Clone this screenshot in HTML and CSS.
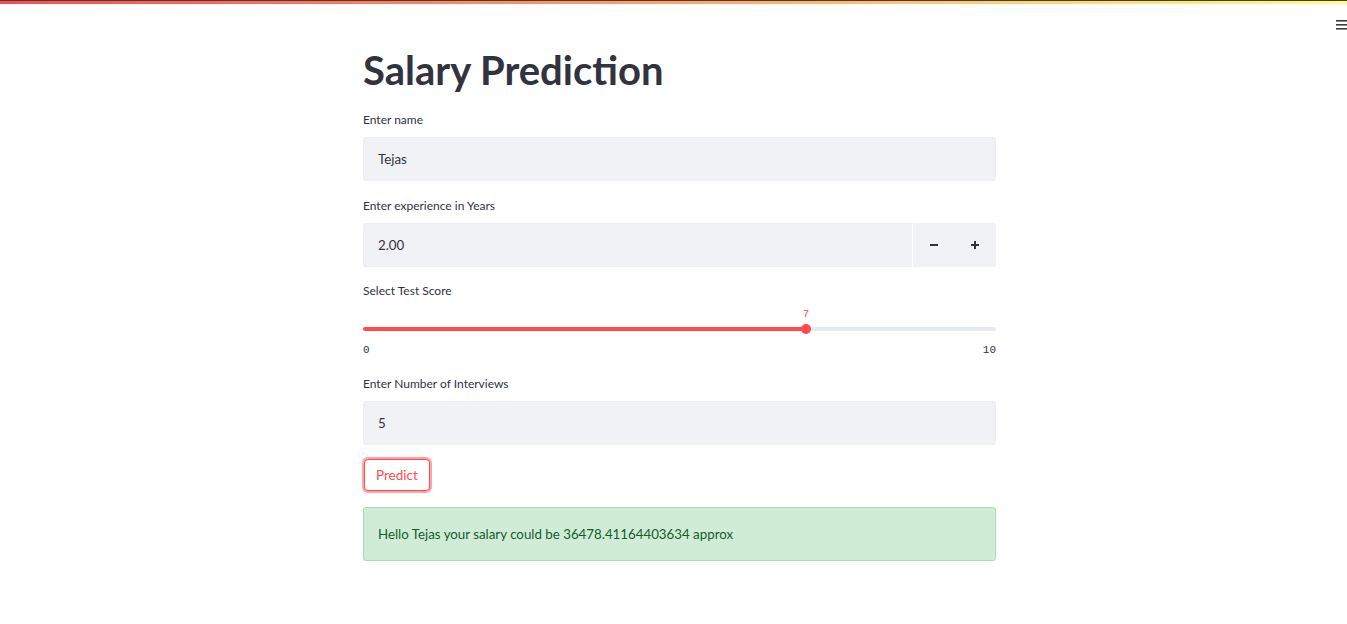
FILE: index.html
```html
<!DOCTYPE html>
<html>
<head>
<meta charset="utf-8">
<link rel="stylesheet" href="styles.css">
</head>
<body>
<div class="topline"></div>
<div class="decoration"></div>
<button class="menu" aria-label="menu">
  <svg width="11" height="10" viewBox="0 0 11 10"><rect x="0" y="0" width="11" height="1.6" fill="#3b3d45"/><rect x="0" y="4" width="11" height="1.6" fill="#3b3d45"/><rect x="0" y="8" width="11" height="1.6" fill="#3b3d45"/></svg>
</button>
<main class="main">
  <h1 class="title">Salary Prediction</h1>

  <div class="field field-name">
    <label class="label">Enter name</label>
    <div class="input"><span>Tejas</span></div>
  </div>

  <div class="field field-exp">
    <label class="label">Enter experience in Years</label>
    <div class="number">
      <div class="input grow"><span>2.00</span></div>
      <div class="steps">
        <span class="step">
          <svg width="8" height="8" viewBox="0 0 8 8"><rect x="0" y="3" width="8" height="2" fill="#31333f"/></svg>
        </span>
        <span class="step">
          <svg width="8" height="8" viewBox="0 0 8 8"><rect x="0" y="3" width="8" height="2" fill="#31333f"/><rect x="3" y="0" width="2" height="8" fill="#31333f"/></svg>
        </span>
      </div>
    </div>
  </div>

  <div class="field field-slider">
    <label class="label">Select Test Score</label>
    <div class="slider">
      <div class="track">
        <div class="fill" style="width:70%"></div>
        <div class="thumb" style="left:70%"><span class="thumbval">7</span></div>
      </div>
      <div class="ticks"><span>0</span><span>10</span></div>
    </div>
  </div>

  <div class="field field-interviews">
    <label class="label">Enter Number of Interviews</label>
    <div class="input"><span>5</span></div>
  </div>

  <button class="btn">Predict</button>

  <div class="success">Hello Tejas your salary could be 36478.41164403634 approx</div>
</main>
</body>
</html>
```

FILE: styles.css
```css
* { box-sizing: border-box; }
html, body { margin: 0; padding: 0; background: #fff; }
body {
  font-family: "Lato", "Noto Sans", sans-serif;
  color: #31333f;
  width: 1347px;
  height: 624px;
  overflow: hidden;
  position: relative;
}
.topline { height: 1px; background: #3f4046; }
.decoration {
  height: 3px;
  background: linear-gradient(90deg, #ff4b4b, #fffd80);
}
.menu {
  position: absolute;
  top: 18px;
  right: 0;
  width: 12px;
  height: 12px;
  padding: 0;
  border: 0;
  background: transparent;
}
.main {
  width: 633px;
  margin-left: 363px;
  padding-top: 40px;
}
.title {
  margin: 0;
  font-size: 40px;
  font-weight: 700;
  line-height: 52px;
  color: #31333f;
}
.field-name { margin-top: 17px; }
.field-exp { margin-top: 18px; }
.field-slider { margin-top: 17px; }
.field-interviews { margin-top: 20px; }
.label {
  display: block;
  font-size: 12px;
  line-height: 13px;
  height: 13px;
  margin-bottom: 11px;
  color: #31333f;
}
.input {
  height: 44px;
  background: #f0f2f6;
  border: 1px solid #eceef2;
  border-radius: 3px;
  display: flex;
  align-items: center;
  padding-left: 14px;
  font-size: 13.3px;
  color: #31333f;
}
.number { display: flex; }
.grow { flex: 1; border-radius: 3px 0 0 3px; border-right: 1px solid #fff; }
.steps {
  width: 83px;
  height: 44px;
  background: #f0f2f6;
  border-radius: 0 3px 3px 0;
  display: flex;
}
.step {
  flex: 1;
  display: flex;
  align-items: center;
  justify-content: center;
}
.slider { padding-top: 19px; }
.track {
  position: relative;
  height: 4px;
  background: #e6eaf1;
  border-radius: 2px;
}
.fill {
  height: 4px;
  background: #ff4b4b;
  border-radius: 2px;
}
.thumb {
  position: absolute;
  top: -3px;
  width: 10px;
  height: 10px;
  margin-left: -5px;
  border-radius: 50%;
  background: #ff4b4b;
}
.thumbval {
  position: absolute;
  top: -16px;
  left: 50%;
  transform: translateX(-50%);
  font-family: "Liberation Mono", "DejaVu Sans Mono", monospace;
  font-size: 11px;
  line-height: 13px;
  color: #ff4b4b;
}
.ticks {
  display: flex;
  justify-content: space-between;
  margin-top: 13px;
  margin-bottom: 1px;
  font-family: "Liberation Mono", "DejaVu Sans Mono", monospace;
  font-size: 11px;
  line-height: 13px;
  color: #31333f;
}
.btn {
  display: block;
  margin-top: 14px;
  margin-left: 1px;
  height: 32px;
  padding: 0 11px;
  background: #fff;
  border: 1px solid #ff4b4b;
  border-radius: 4px;
  box-shadow: 0 0 0 2px rgba(255, 75, 75, 0.5);
  color: #ff4b4b;
  font-family: "Lato", "Noto Sans", sans-serif;
  font-size: 13.5px;
}
.success {
  margin-top: 16px;
  height: 54px;
  background: #d0ecd7;
  border: 1px solid #a8dcb5;
  border-radius: 3px;
  display: flex;
  align-items: center;
  padding-left: 14px;
  font-size: 13.3px;
  color: #135c2c;
}
```
